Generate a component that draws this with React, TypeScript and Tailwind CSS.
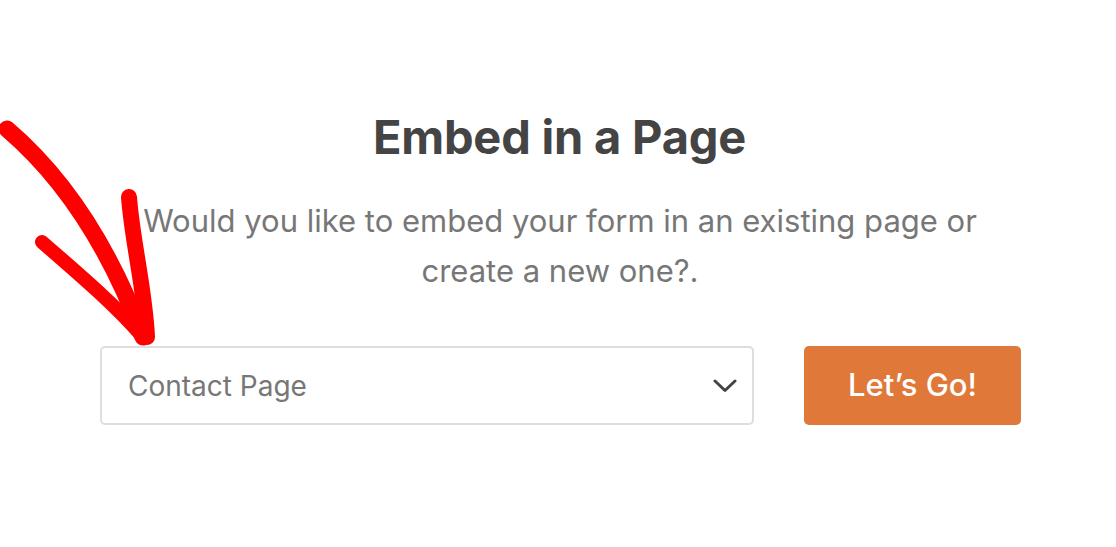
function Arrow() {
  return (
    <svg
      className="absolute left-0 top-[100px] pointer-events-none"
      width={180}
      height={250}
      viewBox="0 0 180 250"
      fill="none"
    >
      <g stroke="#ff0000" strokeLinecap="round" strokeLinejoin="round">
        <path d="M7 29 C 55 70, 105 135, 143 237" strokeWidth={17} />
        <path d="M42 142 C 80 175, 115 205, 142 236" strokeWidth={14} />
        <path d="M129 97 C 132 140, 145 190, 147 237" strokeWidth={16} />
      </g>
    </svg>
  )
}

function Chevron() {
  return (
    <svg width={24} height={14} viewBox="0 0 24 14" fill="none">
      <path
        d="M2 2 L12 11.5 L22 2"
        stroke="#444444"
        strokeWidth={3}
        strokeLinecap="round"
        strokeLinejoin="round"
      />
    </svg>
  )
}

export default function App() {
  return (
    <div className="relative w-[1116px] h-[547px] bg-white overflow-hidden font-['Inter',sans-serif]">
      <Arrow />
      <div className="flex flex-col items-center pt-[109px]">
        <h1 className="ml-[3px] text-[47px] leading-[56px] font-bold text-[#444444] tracking-[-0.2px]">
          Embed in a Page
        </h1>
        <p className="ml-[4px] mt-[31px] w-[860px] text-center text-[31px] leading-[50px] text-[#777777]">
          Would you like to embed your form in an existing page or
          <br />
          create a new one?.
        </p>
        <div className="ml-[5px] mt-[50px] flex items-center gap-[50px]">
          <div className="w-[654px] h-[79px] flex items-center justify-between pl-[26px] pr-[15px] border-2 border-[#dedede] rounded-[5px] bg-white">
            <span className="text-[28px] text-[#777777]">Contact Page</span>
            <Chevron />
          </div>
          <button
            type="button"
            className="w-[217px] h-[79px] rounded-[5px] bg-[#e0783a] text-white text-[31px] font-medium"
          >
            Let’s Go!
          </button>
        </div>
      </div>
    </div>
  )
}
